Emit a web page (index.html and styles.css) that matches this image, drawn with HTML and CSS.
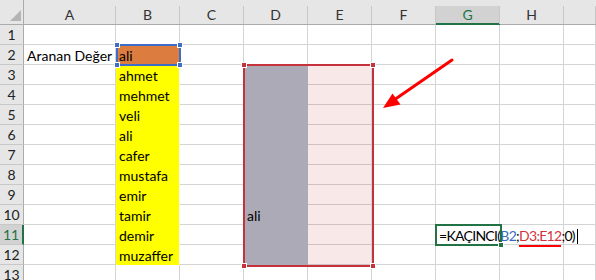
FILE: index.html
```html
<!DOCTYPE html>
<html lang="tr">
<head>
<meta charset="utf-8">
<title>KAÇINCI</title>
<link rel="stylesheet" href="styles.css">
</head>
<body>
<div class="sheet">
  <div class="grid">
    <div class="corner"><svg width="24" height="25" viewBox="0 0 24 25"><polygon points="21,10 21,21 10,21" fill="#b4b4b4"/></svg></div>
    <div class="ch"><span>A</span></div>
    <div class="ch"><span>B</span></div>
    <div class="ch"><span>C</span></div>
    <div class="ch"><span>D</span></div>
    <div class="ch"><span>E</span></div>
    <div class="ch"><span>F</span></div>
    <div class="ch sel"><span>G</span></div>
    <div class="ch"><span>H</span></div>
    <div class="ch"><span></span></div>

    <div class="rh">1</div><div class="c"></div><div class="c"></div><div class="c"></div><div class="c"></div><div class="c"></div><div class="c"></div><div class="c"></div><div class="c"></div><div class="c"></div>
    <div class="rh">2</div><div class="c">Aranan Değer</div><div class="c o">ali</div><div class="c"></div><div class="c"></div><div class="c"></div><div class="c"></div><div class="c"></div><div class="c"></div><div class="c"></div>
    <div class="rh">3</div><div class="c"></div><div class="c y">ahmet</div><div class="c"></div><div class="c g"></div><div class="c p"></div><div class="c"></div><div class="c"></div><div class="c"></div><div class="c"></div>
    <div class="rh">4</div><div class="c"></div><div class="c y">mehmet</div><div class="c"></div><div class="c g"></div><div class="c p"></div><div class="c"></div><div class="c"></div><div class="c"></div><div class="c"></div>
    <div class="rh">5</div><div class="c"></div><div class="c y">veli</div><div class="c"></div><div class="c g"></div><div class="c p"></div><div class="c"></div><div class="c"></div><div class="c"></div><div class="c"></div>
    <div class="rh">6</div><div class="c"></div><div class="c y">ali</div><div class="c"></div><div class="c g"></div><div class="c p"></div><div class="c"></div><div class="c"></div><div class="c"></div><div class="c"></div>
    <div class="rh">7</div><div class="c"></div><div class="c y">cafer</div><div class="c"></div><div class="c g"></div><div class="c p"></div><div class="c"></div><div class="c"></div><div class="c"></div><div class="c"></div>
    <div class="rh">8</div><div class="c"></div><div class="c y">mustafa</div><div class="c"></div><div class="c g"></div><div class="c p"></div><div class="c"></div><div class="c"></div><div class="c"></div><div class="c"></div>
    <div class="rh">9</div><div class="c"></div><div class="c y">emir</div><div class="c"></div><div class="c g"></div><div class="c p"></div><div class="c"></div><div class="c"></div><div class="c"></div><div class="c"></div>
    <div class="rh">10</div><div class="c"></div><div class="c y">tamir</div><div class="c"></div><div class="c g">ali</div><div class="c p"></div><div class="c"></div><div class="c"></div><div class="c"></div><div class="c"></div>
    <div class="rh sel">11</div><div class="c"></div><div class="c y">demir</div><div class="c"></div><div class="c g"></div><div class="c p"></div><div class="c"></div><div class="c fx">=KAÇINCI(<span class="ref1">B2</span>;<span class="ref2">D3:E12</span>;0)<span class="caret"></span></div><div class="c"></div><div class="c"></div>
    <div class="rh">12</div><div class="c"></div><div class="c y">muzaffer</div><div class="c"></div><div class="c g last"></div><div class="c p"></div><div class="c"></div><div class="c"></div><div class="c"></div><div class="c"></div>
    <div class="rh">13</div><div class="c"></div><div class="c"></div><div class="c"></div><div class="c"></div><div class="c"></div><div class="c"></div><div class="c"></div><div class="c"></div><div class="c"></div>
  </div>

  <div class="selbox">
    <i class="h tl"></i><i class="h tr"></i><i class="h bl"></i><i class="h br"></i>
  </div>
  <div class="rangebox">
    <i class="h tl"></i><i class="h tr"></i><i class="h bl"></i><i class="h br"></i>
  </div>
  <div class="activebox"><i class="fill"></i></div>
  <div class="squiggle"></div>
  <svg class="arrow" width="596" height="280" viewBox="0 0 596 280">
    <line x1="452" y1="60" x2="394" y2="100" stroke="#ff0000" stroke-width="3" stroke-linecap="round"/>
    <polygon points="383,108 392.5,93.5 400.5,104.5" fill="#ff0000"/>
  </svg>
</div>
</body>
</html>
```
FILE: styles.css
```css
* { box-sizing: border-box; }
html, body { margin: 0; padding: 0; background: #fff; }
body { width: 596px; height: 280px; overflow: hidden; font-family: Lato, "Liberation Sans", sans-serif; font-size: 14px; color: #000; }

.sheet { position: relative; width: 596px; height: 280px; overflow: hidden; }

.grid {
  display: grid;
  grid-template-columns: 24px 92px repeat(7, 64px) 1fr;
  grid-template-rows: 25px repeat(13, 20px);
}

.corner { background: #e6e6e6; border-right: 1px solid #ababab; border-bottom: 1px solid #ababab; }
.corner svg { display: block; }

.ch { background: #e6e6e6; border-bottom: 1px solid #ababab; padding-top: 6px; color: #333; }
.ch span { display: block; height: 18px; line-height: 18px; text-align: center; border-right: 1px solid #c8c8c8; }
.ch.sel { border-bottom-color: #217346; }
.ch.sel span { background: #d2d2d2; color: #217346; box-shadow: inset 0 -1px #217346; }

.rh { background: #e6e6e6; border-right: 1px solid #ababab; border-bottom: 1px solid #c8c8c8; text-align: center; line-height: 20px; color: #222; }
.rh.sel { background: #d2d2d2; color: #217346; border-right: 2px solid #217346; }

.c { border-right: 1px solid #d4d4d4; border-bottom: 1px solid #d4d4d4; padding: 1px 3px 0; line-height: 20px; white-space: nowrap; }
.c.o { background: #dd7c3f; }
.c.y { background: #ffff00; border-bottom-color: #ffff00; border-right-color: #fff; }
.c.g { background: #acaab7; border-bottom-color: #acaab7; border-right-color: #acaab7; }
.c.p { background: #f8e8e8; border-bottom-color: #d1c0c1; }
.c.fx { overflow: visible; border-right-color: #fff; position: relative; z-index: 1; letter-spacing: -0.7px; }

.ref1 { color: #3a6cc3; }
.ref2 { color: #d2323c; }
.caret { display: inline-block; width: 1px; height: 15px; background: #000; vertical-align: -3px; margin-left: 2px; }

.selbox { position: absolute; left: 116px; top: 44px; width: 65px; height: 22px; border: 2px solid #3c6ec8; }
.rangebox { position: absolute; left: 243px; top: 64px; width: 131px; height: 203px; border: 2px solid #c6323c; }
.h { position: absolute; width: 6px; height: 6px; border: 1px solid #fff; }
.selbox .h { background: #3c6ec8; }
.rangebox .h { background: #c6323c; }
.h.tl { left: -4px; top: -4px; }
.h.tr { right: -4px; top: -4px; }
.h.bl { left: -4px; bottom: -4px; }
.h.br { right: -4px; bottom: -4px; }

.activebox { position: absolute; left: 435px; top: 224px; width: 67px; height: 22px; border: 2px solid #217346; z-index: 2; }
.activebox .fill { position: absolute; right: -4px; bottom: -4px; width: 6px; height: 6px; background: #217346; border: 1px solid #fff; }

.squiggle { position: absolute; left: 519px; top: 245px; width: 42px; height: 2px; background: #ff0000; z-index: 3; }

.arrow { position: absolute; left: 0; top: 0; z-index: 4; }
```
